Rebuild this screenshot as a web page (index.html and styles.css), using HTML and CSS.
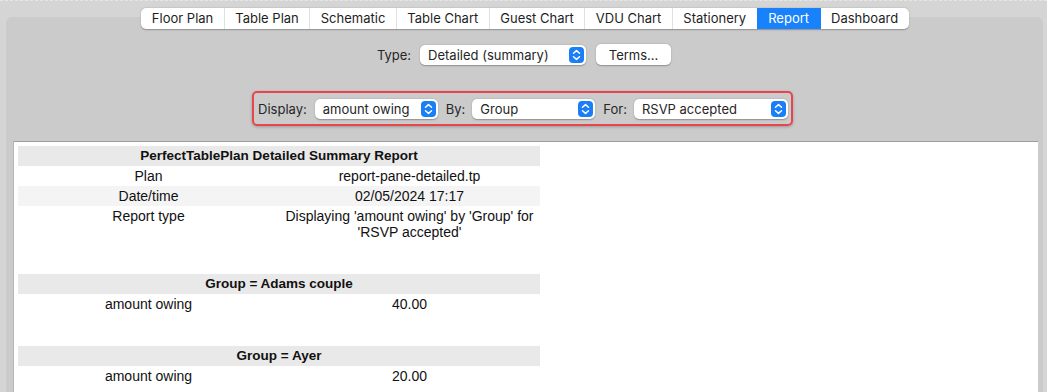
FILE: index.html
```html
<!DOCTYPE html>
<html>
<head>
<title>PerfectTablePlan - Report</title>
<link rel="stylesheet" href="styles.css">
</head>
<body>
<div class="window">
  <!-- tab bar -->
  <div class="tabbar">
    <span class="tab">Floor Plan</span>
    <span class="tab">Table Plan</span>
    <span class="tab">Schematic</span>
    <span class="tab">Table Chart</span>
    <span class="tab">Guest Chart</span>
    <span class="tab">VDU Chart</span>
    <span class="tab">Stationery</span>
    <span class="tab selected">Report</span>
    <span class="tab">Dashboard</span>
  </div>

  <div class="panel">
    <!-- report type -->
    <div class="type-row">
      <span class="label">Type:</span>
      <div class="popup popup-type">
        <span>Detailed (summary)</span>
        <svg class="stepper" width="15" height="16" viewBox="0 0 15 16"><rect width="15" height="16" rx="4" fill="#1a7ff7"/><path d="M4.5 6.2 L7.5 3.6 L10.5 6.2 M4.5 9.8 L7.5 12.4 L10.5 9.8" fill="none" stroke="#fff" stroke-width="1.5" stroke-linecap="round" stroke-linejoin="round"/></svg>
      </div>
      <button class="btn">Terms...</button>
    </div>

    <!-- display options -->
    <div class="filter-row">
      <div class="filter-box">
        <span class="label">Display:</span>
        <div class="popup popup-display">
          <span>amount owing</span>
          <svg class="stepper" width="15" height="16" viewBox="0 0 15 16"><rect width="15" height="16" rx="4" fill="#1a7ff7"/><path d="M4.5 6.2 L7.5 3.6 L10.5 6.2 M4.5 9.8 L7.5 12.4 L10.5 9.8" fill="none" stroke="#fff" stroke-width="1.5" stroke-linecap="round" stroke-linejoin="round"/></svg>
        </div>
        <span class="label">By:</span>
        <div class="popup popup-by">
          <span>Group</span>
          <svg class="stepper" width="15" height="16" viewBox="0 0 15 16"><rect width="15" height="16" rx="4" fill="#1a7ff7"/><path d="M4.5 6.2 L7.5 3.6 L10.5 6.2 M4.5 9.8 L7.5 12.4 L10.5 9.8" fill="none" stroke="#fff" stroke-width="1.5" stroke-linecap="round" stroke-linejoin="round"/></svg>
        </div>
        <span class="label">For:</span>
        <div class="popup popup-for">
          <span>RSVP accepted</span>
          <svg class="stepper" width="15" height="16" viewBox="0 0 15 16"><rect width="15" height="16" rx="4" fill="#1a7ff7"/><path d="M4.5 6.2 L7.5 3.6 L10.5 6.2 M4.5 9.8 L7.5 12.4 L10.5 9.8" fill="none" stroke="#fff" stroke-width="1.5" stroke-linecap="round" stroke-linejoin="round"/></svg>
        </div>
      </div>
    </div>

    <!-- report output -->
    <div class="report">
      <div class="rtable">
        <div class="rhead">PerfectTablePlan Detailed Summary Report</div>
        <div class="rrow"><span>Plan</span><span>report-pane-detailed.tp</span></div>
        <div class="rrow alt"><span>Date/time</span><span>02/05/2024 17:17</span></div>
        <div class="rrow tall"><span>Report type</span><span>Displaying 'amount owing' by 'Group' for 'RSVP accepted'</span></div>

        <div class="rhead group">Group = Adams couple</div>
        <div class="rrow"><span>amount owing</span><span>40.00</span></div>

        <div class="rhead group">Group = Ayer</div>
        <div class="rrow"><span>amount owing</span><span>20.00</span></div>
      </div>
    </div>
  </div>
</div>
</body>
</html>
```

FILE: styles.css
```css
html, body {
margin: 0;
padding: 0;
}
body {
background: #d5d5d5;
overflow: hidden;
font-family: Inter, "Liberation Sans", sans-serif;
font-size: 13px;
color: #222;
}
.window {
height: 392px;
display: flex;
flex-direction: column;
padding-top: 7px;
box-sizing: border-box;
border-top: 1px dashed #e6e6e6;
}
/* tabs */
.tabbar {
display: flex;
align-self: center;
margin-left: 3px;
position: relative;
z-index: 2;
background: white;
border-radius: 5px;
box-shadow: 0 0.5px 1.5px rgba(0, 0, 0, 0.3);
height: 21px;
overflow: hidden;
}
.tab {
padding: 0 10.5px;
line-height: 21px;
color: #1e1e1e;
border-left: 1px solid #e0e0e0;
}
.tab:first-child {
border-left: none;
}
.tab.selected {
background: #1782fb;
color: white;
border-left-color: #1782fb;
}
.tab.selected + .tab {
border-left-color: #1782fb;
}
.panel {
flex: 1;
display: flex;
flex-direction: column;
margin: -12px 4px 0 6px;
padding: 27px 5px 0 7px;
background: #cbcbcb;
border-radius: 6px 6px 0 0;
min-height: 0;
}
.label {
color: #262626;
}
/* popups and buttons */
.type-row {
display: flex;
justify-content: center;
align-items: center;
height: 21px;
margin-left: -3px;
}
.type-row .label {
margin-right: 9px;
}
.popup {
display: flex;
align-items: center;
justify-content: space-between;
height: 20px;
box-sizing: border-box;
padding: 0 2px 0 8px;
background: white;
border-radius: 5px;
box-shadow: 0 0.5px 1.5px rgba(0, 0, 0, 0.3);
color: #262626;
}
.stepper {
display: block;
}
.popup-type {
width: 166px;
}
.popup-display {
width: 123px;
}
.popup-by {
width: 123px;
}
.popup-for {
width: 154px;
}
.btn {
margin-left: 10px;
width: 75px;
height: 21px;
border: none;
border-radius: 5px;
background: white;
box-shadow: 0 0.5px 1.5px rgba(0, 0, 0, 0.3);
font-family: Inter, "Liberation Sans", sans-serif;
font-size: 13px;
color: #262626;
padding: 0;
}
.filter-row {
display: flex;
justify-content: center;
margin-top: 26px;
margin-left: -6px;
}
.filter-box {
display: flex;
align-items: center;
height: 35px;
box-sizing: border-box;
padding: 0 3px 0 4px;
border: 2px solid #e8464c;
border-radius: 5px;
box-shadow: 0 1px 3px rgba(0, 0, 0, 0.25);
}
.filter-box .label {
margin-left: 8px;
margin-right: 7px;
}
.filter-box .label:first-child {
margin-left: 0;
margin-right: 8px;
}
/* report */
.report {
flex: 1;
margin-top: 15px;
background: white;
border-top: 1px solid #9d9d9d;
border-left: 1px solid #b5b5b5;
padding: 4px 0 0 4px;
font-family: "Liberation Sans", Arial, sans-serif;
font-size: 14px;
color: #111;
}
.rtable {
width: 522px;
}
.rhead {
height: 20px;
line-height: 20px;
text-align: center;
font-weight: bold;
font-size: 13.5px;
background: #e9e9e9;
}
.rhead.group {
margin-top: 32px;
}
.rrow {
display: grid;
grid-template-columns: 261px 261px;
line-height: 20px;
text-align: center;
}
.rrow.alt {
background: #f4f4f4;
}
.rrow.tall {
line-height: 16px;
padding-top: 2px;
height: 36px;
box-sizing: border-box;
}
.rrow.tall span:last-child {
padding: 0 2px;
}
```
